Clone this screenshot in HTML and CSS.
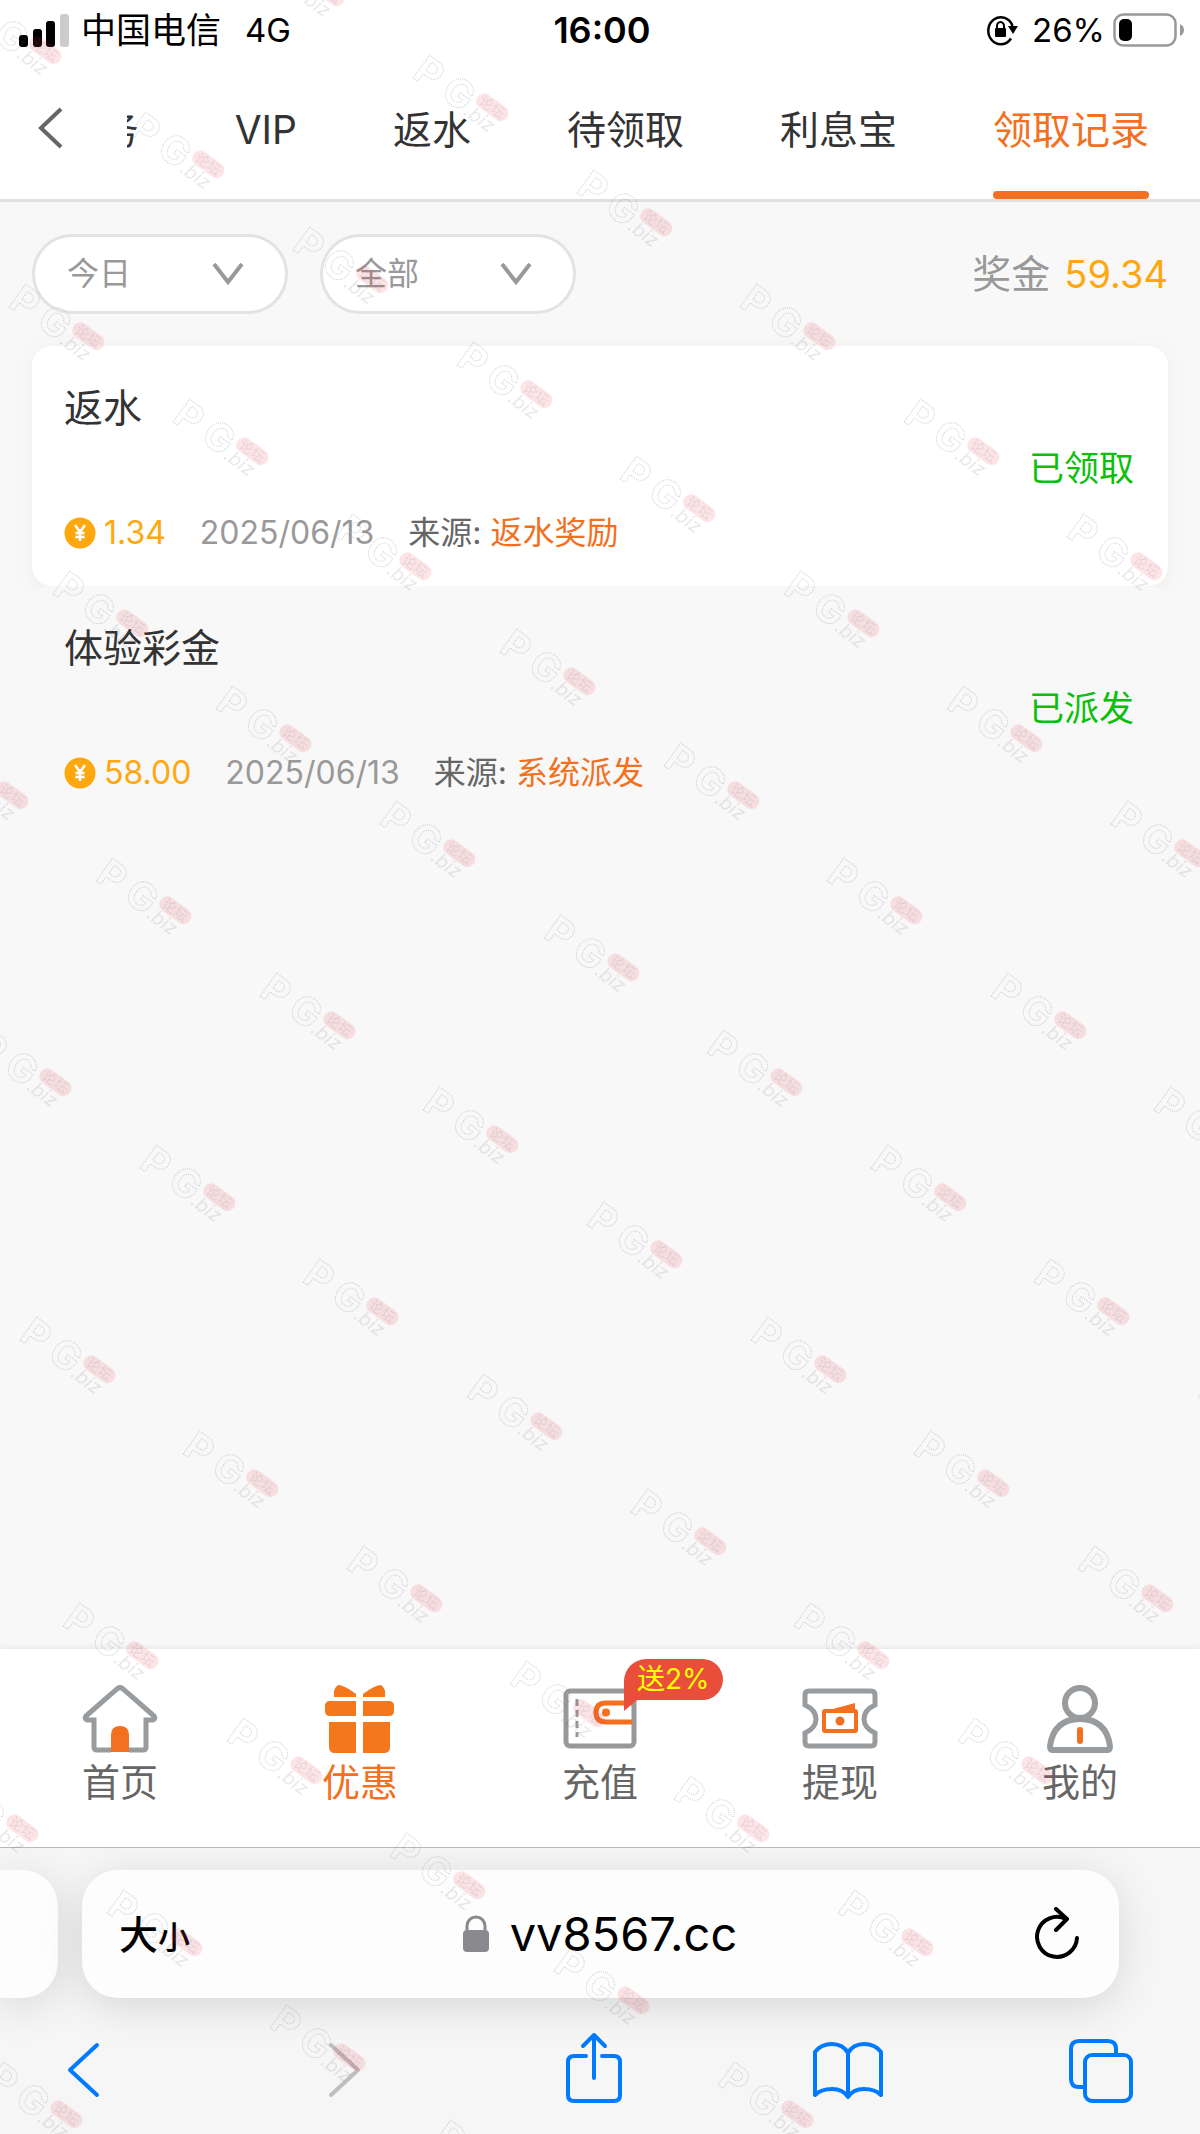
FILE: index.html
```html
<!DOCTYPE html>
<html lang="zh-CN">
<head>
<meta charset="utf-8">
<meta name="viewport" content="width=device-width, initial-scale=1">
<title>领取记录</title>
<link rel="stylesheet" href="styles.css">
</head>
<body>
<div class="statusbar">
  <div class="status-side">
    <svg class="signal" width="50" height="36" viewBox="0 0 50 36" aria-hidden="true">
      <rect x="0" y="23" width="9" height="12" rx="3"/><rect x="14" y="17" width="9" height="18" rx="3"/><rect x="27" y="9" width="9" height="26" rx="3"/><rect x="41" y="2" width="9" height="33" rx="3" fill="#ccc"/>
    </svg>
    <span class="carrier">中国电信</span>
    <span class="network">4G</span>
  </div>
  <span class="clock">16:00</span>
  <div class="status-side status-right">
    <svg width="32" height="32" viewBox="0 0 32 32" aria-hidden="true">
      <path d="M25 24.500A12.500 13.500 0 1 1 26.500 12" fill="none" stroke="#000" stroke-width="2.500"/>
      <path d="M22 12h10l-5 8z"/><rect x="9" y="14" width="11" height="9" rx="1"/><path d="M11 15v-3a3.500 4 0 0 1 7 0v3" fill="none" stroke="#000" stroke-width="2"/>
    </svg>
    <span class="percent">26%</span>
    <svg width="72" height="34" viewBox="0 0 72 34" aria-hidden="true">
      <rect x="1.500" y="1.500" width="61" height="31" rx="9" fill="none" stroke="#999" stroke-width="2.500"/><rect x="6" y="6" width="13" height="22" rx="5"/><path d="M67 11q4 2 4 6t-4 6z" fill="#999"/>
    </svg>
  </div>
</div>

<header class="topbar">
  <button class="back" type="button" aria-label="返回">
    <svg width="26" height="42" viewBox="0 0 26 42"><path d="M23 2L3 21l20 19" fill="none" stroke="#666" stroke-width="4"/></svg>
  </button>
  <nav class="tabs">
    <a href="#">任务</a><a href="#">VIP</a><a href="#">返水</a><a href="#">待领取</a><a href="#">利息宝</a><a href="#" class="current">领取记录</a>
  </nav>
</header>

<main class="content">
  <div class="filters">
    <div class="picker">
      <select aria-label="日期"><option>今日</option></select>
      <svg width="32" height="24" viewBox="0 0 32 24" aria-hidden="true"><path d="M2 2l14 18L30 2" fill="none" stroke="#999" stroke-width="4"/></svg>
    </div>
    <div class="picker">
      <select aria-label="类型"><option>全部</option></select>
      <svg width="32" height="24" viewBox="0 0 32 24" aria-hidden="true"><path d="M2 2l14 18L30 2" fill="none" stroke="#999" stroke-width="4"/></svg>
    </div>
    <p class="total">奖金 <strong>59.34</strong></p>
  </div>

  <ul class="records">
    <li class="record">
      <h2>返水</h2>
      <span class="state">已领取</span>
      <div class="meta">
        <span class="amount"><svg width="32" height="32" viewBox="0 0 32 32" aria-hidden="true"><circle cx="16" cy="16" r="15.500" fill="#ffa70f"/><path d="M11 8l5 7 5-7M16 15v9M11.500 16h9M11.500 20h9" fill="none" stroke="#fff" stroke-width="2.500"/></svg>1.34</span>
        <time>2025/06/13</time>
        <span class="source">来源: <b>返水奖励</b></span>
      </div>
    </li>
    <li class="record">
      <h2>体验彩金</h2>
      <span class="state">已派发</span>
      <div class="meta">
        <span class="amount"><svg width="32" height="32" viewBox="0 0 32 32" aria-hidden="true"><circle cx="16" cy="16" r="15.500" fill="#ffa70f"/><path d="M11 8l5 7 5-7M16 15v9M11.500 16h9M11.500 20h9" fill="none" stroke="#fff" stroke-width="2.500"/></svg>58.00</span>
        <time>2025/06/13</time>
        <span class="source">来源: <b>系统派发</b></span>
      </div>
    </li>
  </ul>
</main>

<nav class="bottomnav">
  <a href="#">
    <svg width="76" height="68" viewBox="0 0 76 68" aria-hidden="true"><path d="M29 67V50q0-9 9-9t9 9v17z" fill="#f37021"/><path d="M29 65H15q-3 0-3-3V35H5q-3-1-1-4L35 4q3-3 6 0l31 27q2 3-1 4h-7v27q0 3-3 3H47" fill="none" stroke="#999c9e" stroke-width="5"/></svg>
    <span>首页</span>
  </a>
  <a href="#" class="current">
    <svg width="76" height="68" viewBox="0 0 76 68" aria-hidden="true" fill="#f5771c"><path d="M12 12q-1-9 4-12 6 0 18 9v3H12zM63 12q1-9-4-12-6 0-18 9v3h22z"/><path d="M8 16h26v15H8q-5 0-5-5v-5q0-5 5-5zM41 16h26q5 0 5 5v5q0 5-5 5H41z"/><path d="M7 37h27v31H13q-6 0-6-6zM41 37h27v25q0 6-6 6H41z"/></svg>
    <span>优惠</span>
  </a>
  <a href="#">
    <svg width="76" height="68" viewBox="0 0 76 68" aria-hidden="true" fill="none"><rect x="4" y="6" width="68" height="55" rx="4" stroke="#999" stroke-width="5"/><path d="M15 14v38" stroke="#999" stroke-width="3" stroke-dasharray="7 4"/><path d="M70 18H44q-10 0-10 9.500T44 37h26" stroke="#f37021" stroke-width="5"/><circle cx="44" cy="27.500" r="4" fill="#f37021"/></svg>
    <span>充值</span>
    <em class="badge">送2%</em>
  </a>
  <a href="#">
    <svg width="76" height="68" viewBox="0 0 76 68" aria-hidden="true" fill="none"><path d="M7 6h62q4 0 4 4v10q-11 5-11 14t11 14v9q0 4-4 4H7q-4 0-4-4v-9q11-5 11-14T3 20V10q0-4 4-4z" stroke="#999c9e" stroke-width="5"/><rect x="22" y="26" width="32" height="20" rx="1" stroke="#f37021" stroke-width="4"/><circle cx="38" cy="36" r="4.500" fill="#f37021"/><path d="M31 24l22-6v6z" fill="#f37021"/></svg>
    <span>提现</span>
  </a>
  <a href="#">
    <svg width="76" height="68" viewBox="0 0 76 68" aria-hidden="true" fill="none"><circle cx="38" cy="18" r="15" stroke="#999c9e" stroke-width="6"/><path d="M10 65q-2 0-2-4 4-27 30-27t30 27q0 4-2 4z" stroke="#999c9e" stroke-width="6"/><path d="M38 45v11" stroke="#f37021" stroke-width="6" stroke-linecap="round"/></svg>
    <span>我的</span>
  </a>
</nav>

<footer class="browser">
  <div class="address-row">
    <div class="side-tab"></div>
    <div class="address">
      <button type="button" class="textsize" aria-label="大小">大<small>小</small></button>
      <button type="button" class="url">
        <svg width="28" height="38" viewBox="0 0 28 38" aria-hidden="true"><rect x="1" y="15" width="26" height="22" rx="4" fill="#8a8a8e"/><path d="M5 17v-6a9 9 0 0 1 18 0v6" fill="none" stroke="#8a8a8e" stroke-width="3"/></svg>
        vv8567.cc
      </button>
      <button type="button" class="reload" aria-label="刷新">
        <svg width="46" height="54" viewBox="0 0 46 54"><path d="M43 31A20 20 0 1 1 32 12" fill="none" stroke="#000" stroke-width="4" stroke-linecap="round"/><path d="M22 2l11 10-11 11" fill="none" stroke="#000" stroke-width="4" stroke-linecap="round" stroke-linejoin="round"/></svg>
      </button>
    </div>
  </div>
  <div class="toolbar">
    <button type="button" aria-label="后退"><svg width="76" height="76" viewBox="0 0 76 76"><path d="M51 15L24 40l27 25" class="tool"/></svg></button>
    <button type="button" aria-label="前进" disabled><svg width="76" height="76" viewBox="0 0 76 76"><path d="M31 15l27 25-27 25" class="tool"/></svg></button>
    <button type="button" aria-label="分享"><svg width="76" height="76" viewBox="0 0 76 76"><path d="M31 26H19q-6 0-6 6v33q0 6 6 6h40q6 0 6-6V32q0-6-6-6H47M39 48V5M28 16L39 5l11 11" class="tool"/></svg></button>
    <button type="button" aria-label="书签"><svg width="76" height="76" viewBox="0 0 76 76"><path d="M39 23q-5-9-16-9T6 22v43q6-6 17-6t16 8q5-8 16-8t17 6V22q-6-8-17-8t-16 9zM39 23v43" class="tool"/></svg></button>
    <button type="button" aria-label="标签页"><svg width="76" height="76" viewBox="0 0 76 76"><rect x="22" y="25" width="46" height="46" rx="7" class="tool"/><path d="M22 57h-6q-8 0-8-8V19q0-8 8-8h29q8 0 8 8v6" class="tool"/></svg></button>
  </div>
</footer>

<svg class="watermark" aria-hidden="true">
  <defs>
    <g id="mark">
      <g transform="rotate(36)">
        <text x="-4" y="27" class="mark-name">P</text>
        <text x="30" y="26" class="mark-name">G</text>
        <text x="60" y="27" class="mark-tld">.biz</text>
        <rect x="62" y="-4" width="36" height="16" rx="8" class="mark-pill"/>
        <text x="66" y="9" class="mark-forum">论坛</text>
      </g>
    </g>
  </defs>
</svg>
<script src="watermark.js"></script>
</body>
</html>
```
FILE: watermark.js
```js
// Repeats the watermark over the whole window on a slanted grid,
// leaving the top right and bottom right corners clear.
(function () {
  var layer = document.querySelector('.watermark');
  var origin = { x: 430, y: 57 };
  var across = { x: 163.6, y: 114.7 };
  var down = { x: -283.7, y: 57.35 };

  function inClearCorner(x, y, w, h) {
    var top = y < 360 && x - y > w / 2;
    var bottom = y > h - 334 && x > w - 250;
    return top || bottom;
  }

  function draw() {
    layer.querySelectorAll('use').forEach(function (node) { node.remove(); });
    var w = window.innerWidth, h = window.innerHeight;
    for (var i = -20; i < 40; i++) {
      for (var j = -20; j < 40; j++) {
        var x = Math.round(origin.x + i * across.x + j * down.x);
        var y = Math.round(origin.y + i * across.y + j * down.y);
        if (x < -100 || x > w + 20 || y < -90 || y > h) continue;
        if (inClearCorner(x, y, w, h)) continue;
        var use = document.createElementNS('http://www.w3.org/2000/svg', 'use');
        use.setAttribute('href', '#mark');
        use.setAttribute('x', x);
        use.setAttribute('y', y);
        layer.appendChild(use);
      }
    }
  }

  draw();
  window.addEventListener('resize', draw);
})();
```
FILE: styles.css
```css
* { box-sizing: border-box; }

body {
  margin: 0;
  min-height: 100vh;
  display: flex;
  flex-direction: column;
  background: #f8f8f8;
  color: #333;
  font-family: Inter, "Noto Sans CJK SC", sans-serif;
  font-size: 32px;
  line-height: 48px;
}

a { color: inherit; text-decoration: none; }
button { border: 0; padding: 0; background: none; color: inherit; font: inherit; }
h2, p, ul { margin: 0; padding: 0; font-weight: 400; }
svg { display: block; flex: none; }

/* phone status bar */
.statusbar {
  display: grid;
  grid-template-columns: 1fr auto 1fr;
  align-items: center;
  height: 60px;
  padding: 0 15px 0 19px;
  background: #fff;
  color: #000;
}
.status-side { display: flex; align-items: center; }
.status-right { justify-content: flex-end; gap: 8px; }
.carrier { margin-left: 12px; font-size: 35px; }
.network { margin-left: 24px; font-size: 33px; }
.percent { margin-left: 6px; font-size: 33px; }
.clock { font-weight: 600; font-size: 36px; }

/* page header */
.topbar {
  display: flex;
  height: 142px;
  background: #fff;
  border-bottom: 3px solid #e0e0e0;
}
.back { width: 127px; padding: 0 0 4px 38px; }
.tabs {
  flex: 1;
  display: flex;
  justify-content: flex-end;
  gap: 96px;
  padding-right: 51px;
  overflow: hidden;
  font-size: 39px;
}
.tabs a {
  flex: none;
  display: flex;
  flex-direction: column;
  justify-content: space-between;
  padding-top: 46px;
  white-space: nowrap;
}
.tabs .current { color: #f37021; }
.tabs .current::after {
  content: "";
  height: 8px;
  border-radius: 4px;
  background: #f37021;
}

/* filters */
.content { flex: 1; padding: 32px; }
.filters { display: flex; align-items: center; gap: 32px; margin-bottom: 32px; }
.picker { display: grid; align-items: center; width: 256px; }
.picker select {
  grid-area: 1 / 1;
  appearance: none;
  width: 100%;
  height: 80px;
  padding: 0 32px;
  border: 3px solid #e3e3e3;
  border-radius: 40px;
  background: #fff;
  color: #999;
  font: inherit;
}
.picker svg {
  grid-area: 1 / 1;
  justify-self: end;
  margin-right: 44px;
  pointer-events: none;
}
.total {
  display: flex;
  gap: 14px;
  margin-left: auto;
  color: #999;
  font-size: 39px;
}
.total strong { color: #ffa70f; font-weight: 400; font-size: 38px; }

/* records */
.records { list-style: none; }
.record {
  display: grid;
  grid-template-columns: 1fr auto;
  padding: 38px 34px 29px 32px;
  height: 240px;
  border-radius: 20px;
}
.record:nth-child(odd) { background: #fff; box-shadow: 0 4px 20px rgba(160, 130, 90, .08); }
.record:nth-child(even) { background: #f8f8f8; }
.record h2 { font-size: 39px; grid-area: 1 / 1; }
.state { grid-area: 1 / 2 / 3 / 3; align-self: center; padding-bottom: 6px; color: #0bbf0b; font-size: 35px; }
.meta { grid-area: 2 / 1; align-self: end; display: flex; align-items: center; gap: 34px; }
.amount { display: flex; align-items: center; gap: 8px; color: #ffa70f; }
.meta time { color: #999; }
.source { color: #666; }
.source b { color: #f37021; font-weight: 400; }

/* site navigation */
.bottomnav {
  display: grid;
  grid-template-columns: repeat(5, 1fr);
  height: 198px;
  background: #fff;
  box-shadow: 0 0 8px rgba(0, 0, 0, .1);
  color: #666;
  font-size: 38px;
}
.bottomnav a {
  position: relative;
  display: flex;
  flex-direction: column;
  align-items: center;
  gap: 5px;
  padding-top: 36px;
}
.bottomnav .current { color: #f37021; }
.badge {
  position: absolute;
  top: 10px;
  left: calc(50% + 24px);
  padding: 0 13px;
  border-radius: 24px 22px 22px 0;
  background: #e94e3b;
  color: #ff0;
  font-size: 28px;
  font-style: normal;
  line-height: 41px;
  white-space: nowrap;
}
.badge::after {
  content: "";
  position: absolute;
  left: 0;
  top: 100%;
  width: 13px;
  height: 11px;
  background: #e94e3b;
  clip-path: polygon(0 0, 100% 0, 0 100%);
}

/* browser chrome */
.browser {
  position: relative;
  border-top: 1px solid #b8b8b8;
  background: #f6f6f6;
  color: #000;
  overflow: hidden;
}
.address-row { display: flex; gap: 24px; padding: 22px 81px 0 0; }
.side-tab, .address { height: 128px; background: #fdfdfd; box-shadow: 0 8px 44px rgba(0, 0, 0, .13); }
.side-tab { width: 58px; border-radius: 0 36px 36px 0; }
.address {
  flex: 1;
  display: grid;
  grid-template-columns: 1fr auto 1fr;
  align-items: center;
  padding: 0 39px 0 37px;
  border-radius: 36px;
}
.textsize { justify-self: start; padding-top: 4px; font-size: 39px; font-weight: 500; }
.textsize small { font-size: 32px; }
.url { display: flex; align-items: center; gap: 20px; font-size: 47px; }
.reload { justify-self: end; }
.toolbar { display: flex; justify-content: space-between; padding: 32px 61px 28px 46px; }
.toolbar button { color: #007aff; }
.toolbar button:disabled { color: #bfbfbf; }
.tool { fill: none; stroke: currentColor; stroke-width: 4; stroke-linecap: round; stroke-linejoin: round; }

/* watermark layer */
.watermark { position: fixed; inset: 0; width: 100%; height: 100%; pointer-events: none; }
.mark-name {
  fill: none;
  stroke: rgba(110, 110, 130, .3);
  stroke-width: 1;
  stroke-dasharray: 1 1;
  font: 700 39px Inter, sans-serif;
}
.mark-tld { fill: rgba(110, 110, 120, .15); font: italic 400 19px Inter, sans-serif; }
.mark-pill { fill: rgba(235, 45, 60, .12); }
.mark-forum { fill: rgba(110, 110, 120, .15); font: 14px "Noto Sans CJK SC", sans-serif; }
```
